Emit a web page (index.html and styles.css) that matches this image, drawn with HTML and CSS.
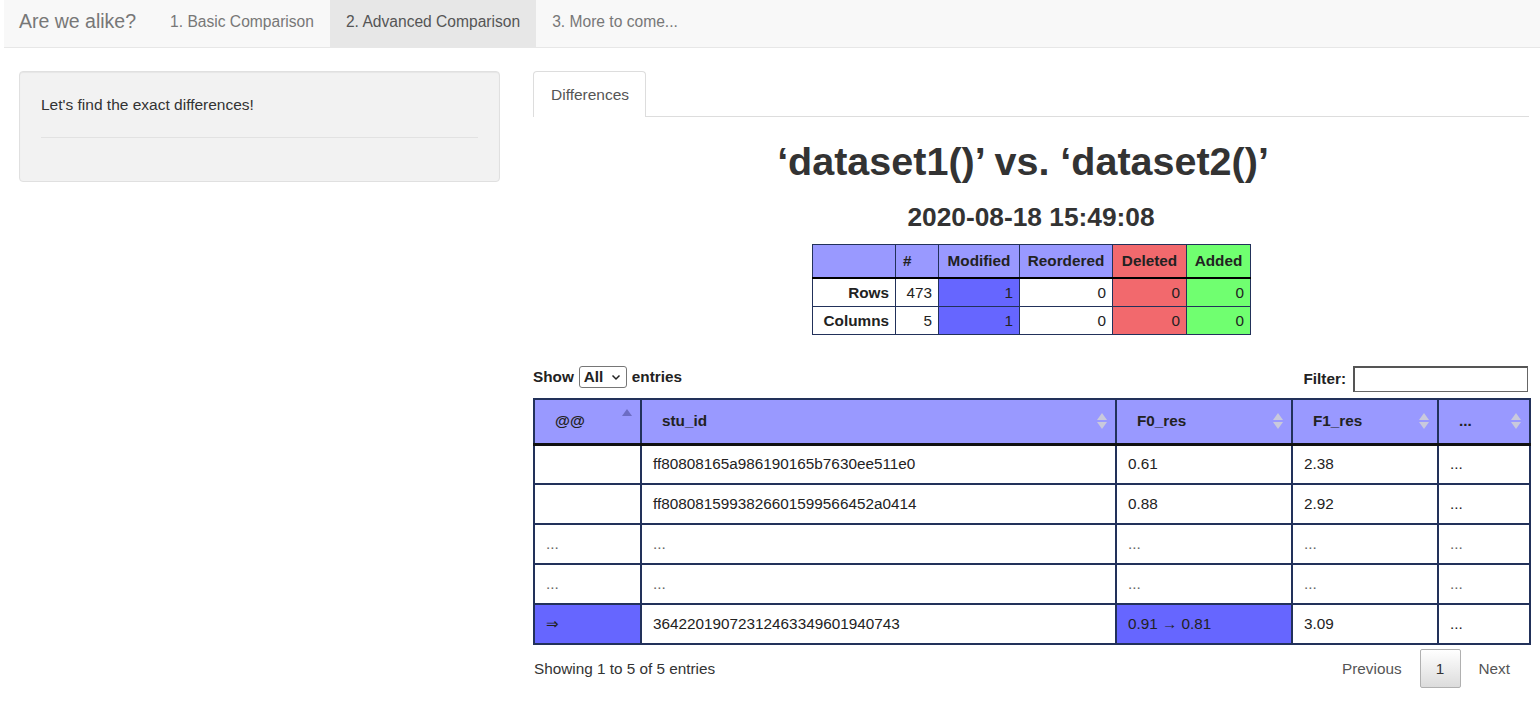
FILE: index.html
```html
<!DOCTYPE html>
<html>
<head>
<meta charset="utf-8">
<title>Are we alike?</title>
<link rel="stylesheet" href="styles.css">
</head>
<body>
<nav class="navbar">
  <span class="brand">Are we alike?</span>
  <ul class="nav">
    <li><a>1. Basic Comparison</a></li>
    <li class="active"><a>2. Advanced Comparison</a></li>
    <li><a>3. More to come...</a></li>
  </ul>
</nav>
<div class="page">
  <aside class="sidebar">
    <div class="well">
      <p>Let's find the exact differences!</p>
      <hr>
    </div>
  </aside>
  <main class="main">
    <ul class="tabs">
      <li class="tab active">Differences</li>
    </ul>
    <h1 class="title">‘dataset1()’ vs. ‘dataset2()’</h1>
    <h3 class="date">2020-08-18 15:49:08</h3>
    <div class="summary-wrap">
      <table class="summary">
        <thead>
          <tr>
            <th class="c-blank"></th>
            <th class="c-num">#</th>
            <th class="c-mod">Modified</th>
            <th class="c-reo">Reordered</th>
            <th class="c-del del">Deleted</th>
            <th class="c-add add">Added</th>
          </tr>
        </thead>
        <tbody>
          <tr>
            <td class="rh">Rows</td>
            <td>473</td>
            <td class="mod">1</td>
            <td>0</td>
            <td class="del">0</td>
            <td class="add">0</td>
          </tr>
          <tr>
            <td class="rh">Columns</td>
            <td>5</td>
            <td class="mod">1</td>
            <td>0</td>
            <td class="del">0</td>
            <td class="add">0</td>
          </tr>
        </tbody>
      </table>
    </div>
    <div class="controls">
      <label class="length">Show <span class="select">All <svg width="10" height="7" viewBox="0 0 10 7"><path d="M1.5 1.5 L5 5 L8.5 1.5" fill="none" stroke="#222" stroke-width="1.5"/></svg></span> entries</label>
      <label class="filter">Filter: <span class="input"></span></label>
    </div>
    <table class="data">
      <thead>
        <tr>
          <th class="w1 asc">@@<span class="sort"></span></th>
          <th class="w2">stu_id<span class="sort"></span></th>
          <th class="w3">F0_res<span class="sort"></span></th>
          <th class="w4">F1_res<span class="sort"></span></th>
          <th class="w5">...<span class="sort"></span></th>
        </tr>
      </thead>
      <tbody>
        <tr><td></td><td>ff80808165a986190165b7630ee511e0</td><td>0.61</td><td>2.38</td><td>...</td></tr>
        <tr><td></td><td>ff8080815993826601599566452a0414</td><td>0.88</td><td>2.92</td><td>...</td></tr>
        <tr class="dim"><td>...</td><td>...</td><td>...</td><td>...</td><td>...</td></tr>
        <tr class="dim"><td>...</td><td>...</td><td>...</td><td>...</td><td>...</td></tr>
        <tr><td class="mod">⇒</td><td>36422019072312463349601940743</td><td class="mod">0.91 → 0.81</td><td>3.09</td><td>...</td></tr>
      </tbody>
    </table>
    <div class="footer">
      <div class="info">Showing 1 to 5 of 5 entries</div>
      <div class="paginate">
        <span class="pbtn">Previous</span>
        <span class="pbtn current">1</span>
        <span class="pbtn">Next</span>
      </div>
    </div>
  </main>
</div>
</body>
</html>
```
FILE: styles.css
```css
html, body {
  margin: 0;
  padding: 0;
  background: #fff;
}
body {
  font-family: "Liberation Sans", Arial, sans-serif;
  font-size: 15.5px;
  color: #333;
}
.navbar {
  margin-left: 4px;
  height: 47px;
  background: #f8f8f8;
  border-bottom: 1px solid #e7e7e7;
  display: flex;
  align-items: stretch;
}
.brand {
  font-size: 19.5px;
  color: #777;
  padding: 0 18px 4px 15px;
  display: flex;
  align-items: center;
}
.nav {
  list-style: none;
  margin: 0;
  padding: 0;
  display: flex;
}
.nav li {
  display: flex;
}
.nav a {
  display: flex;
  align-items: center;
  padding: 0 16px 4px 16px;
  color: #777;
  font-size: 15.6px;
}
.nav li.active a {
  background: #e7e7e7;
  color: #555;
}
.page {
  display: flex;
  padding: 23px 11px 0 19px;
  gap: 33px;
  align-items: flex-start;
}
.sidebar {
  width: 481px;
  flex: none;
}
.well {
  box-sizing: border-box;
  height: 111px;
  background: #f2f2f2;
  border: 1px solid #e0e0e0;
  border-radius: 4px;
  padding: 22px 21px 0 21px;
  box-shadow: inset 0 1px 1px rgba(0,0,0,0.05);
}
.well p {
  margin: 0;
  line-height: 22px;
  font-size: 15.5px;
}
.well hr {
  margin: 21px 0 0 0;
  border: 0;
  border-top: 1px solid #e2e2e2;
}
.main {
  width: 996px;
  flex: none;
}
.tabs {
  list-style: none;
  margin: 0;
  padding: 0;
  display: flex;
  border-bottom: 1px solid #ddd;
}
.tab {
  box-sizing: border-box;
  padding: 0 17px;
  display: flex;
  align-items: center;
  border: 1px solid #ddd;
  border-bottom: 0;
  border-radius: 4px 4px 0 0;
  margin-bottom: -1px;
  background: #fff;
  width: 113px;
  color: #555;
  font-size: 15.5px;
  height: 46px;
}
.title {
  margin: 23px 0 0 0;
  text-align: center;
  font-size: 39.5px;
  line-height: 43px;
  font-weight: bold;
  color: #333;
  padding-right: 16px;
}
.date {
  margin: 20px 0 0 0;
  text-align: center;
  font-size: 26.3px;
  line-height: 29px;
  font-weight: bold;
  color: #333;
}
.summary-wrap {
  display: flex;
  justify-content: flex-start;
  padding-left: 279px;
  margin-top: 12px;
}
.summary {
  border-collapse: collapse;
  font-size: 15.3px;
  color: #222;
}
.summary th, .summary td {
  border: 1px solid #22315a;
  padding: 0 6px;
  text-align: right;
}
.summary th {
  height: 32px;
  background: #9999ff;
  font-weight: bold;
  text-align: center;
  border-bottom: 2px solid #000;
}
.summary td {
  height: 27px;
  background: #fff;
}
.summary td.rh {
  font-weight: bold;
}
.summary .c-blank { width: 70px; }
.summary .c-num { width: 29px; text-align: left; padding-left: 7px; }
.summary .c-mod { width: 68px; }
.summary .c-reo { width: 80px; }
.summary .c-del { width: 61px; }
.summary .c-add { width: 51px; }
.summary .mod { background: #6666ff; }
.summary .del { background: #f2696d; }
.summary .add { background: #70ff70; }
.controls {
  display: flex;
  justify-content: space-between;
  align-items: center;
  margin-top: 30px;
  height: 27px;
  font-size: 15.3px;
  font-weight: bold;
  color: #222;
}
.length {
  display: flex;
  align-items: center;
  gap: 5px;
  margin-top: -3px;
}
.select {
  box-sizing: border-box;
  width: 48px;
  height: 22px;
  border: 1px solid #767676;
  border-radius: 3px;
  display: flex;
  align-items: center;
  justify-content: space-between;
  padding: 0 5px 0 4px;
  font-weight: bold;
}
.filter {
  display: flex;
  align-items: center;
  gap: 7px;
  padding-right: 1px;
}
.input {
  box-sizing: border-box;
  width: 175px;
  height: 26px;
  border: 1px solid #666;
  border-top: 2px solid #555;
  border-left: 2px solid #555;
}
.data {
  margin-top: 6px;
  width: 996px;
  border-collapse: collapse;
  table-layout: fixed;
  font-size: 15.3px;
  color: #222;
}
.data th, .data td {
  box-sizing: border-box;
  border: 2px solid #22315a;
  text-align: left;
  white-space: nowrap;
}
.data th {
  position: relative;
  height: 45px;
  background: #9999ff;
  font-weight: bold;
  padding: 0 20px;
  border-bottom: 3px solid #111;
}
.data td {
  height: 40px;
  padding: 0 11px;
  background: #fff;
}
.data tr.dim td {
  color: #666;
}
.data td.mod {
  background: #6666ff;
}
.data .w1 { width: 107px; }
.data .w2 { width: 475px; }
.data .w3 { width: 176px; }
.data .w4 { width: 146px; }
.data .w5 { width: 92px; }
.sort {
  position: absolute;
  right: 8px;
  top: 50%;
  width: 10px;
  height: 18px;
  margin-top: -9px;
}
.sort::before, .sort::after {
  content: "";
  position: absolute;
  left: 0;
  border-left: 5px solid transparent;
  border-right: 5px solid transparent;
}
.sort::before {
  top: 1px;
  border-bottom: 7px solid #c9c9dc;
}
.sort::after {
  bottom: 1px;
  border-top: 7px solid #c9c9dc;
}
.asc .sort::before {
  border-bottom-color: #6c6cc4;
  top: 0;
}
.asc .sort::after {
  display: none;
}
.asc .sort {
  margin-top: -12px;
}
.footer {
  display: flex;
  justify-content: space-between;
  align-items: center;
  margin-top: 4px;
  font-size: 15.3px;
  color: #333;
}
.info {
  padding-left: 1px;
}
.paginate {
  display: flex;
  align-items: center;
}
.pbtn {
  box-sizing: border-box;
  height: 39px;
  display: flex;
  align-items: center;
  padding: 0 18px;
  color: #555;
}
.pbtn.current {
  width: 41px;
  justify-content: center;
  padding: 0;
  color: #333;
  border: 1px solid #b0b0b0;
  border-radius: 2px;
  background: linear-gradient(to bottom, #ffffff 0%, #dcdcdc 100%);
}
.paginate .pbtn:last-child {
  padding-right: 19px;
}
```
